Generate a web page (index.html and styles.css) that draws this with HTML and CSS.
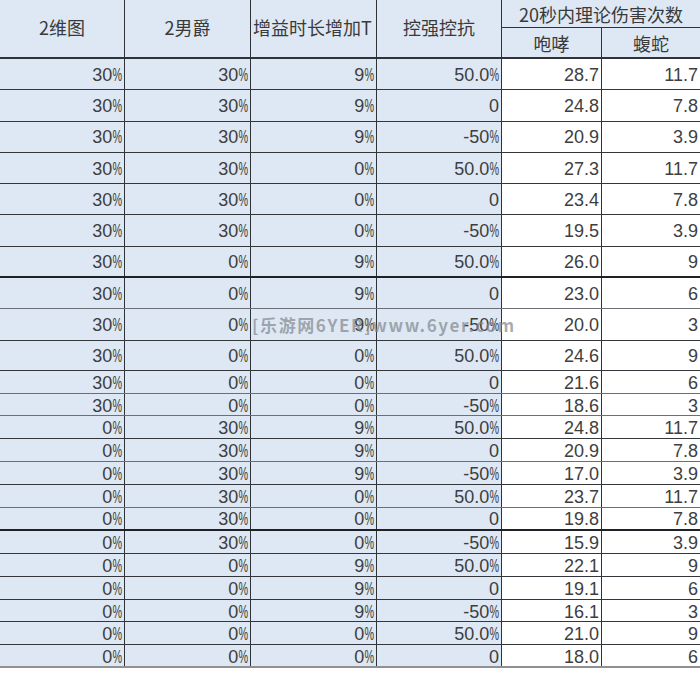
FILE: index.html
```html
<!DOCTYPE html>
<html lang="zh">
<head>
<meta charset="utf-8">
<title>20秒内理论伤害次数</title>
<link rel="stylesheet" href="styles.css">
</head>
<body>
<div class="sheet">
  <div class="head">
    <div class="h h1">2维图</div>
    <div class="h h2">2男爵</div>
    <div class="h h3">增益时长增加T</div>
    <div class="h h4">控强控抗</div>
    <div class="h h5">20秒内理论伤害次数</div>
    <div class="h h6">咆哮</div>
    <div class="h h7">蝮蛇</div>
  </div>

  <div class="row t"><div class="c">30<em class="p">%</em></div><div class="c">30<em class="p">%</em></div><div class="c">9<em class="p">%</em></div><div class="c">50.0<em class="p">%</em></div><div class="c">28.7</div><div class="c">11.7</div></div>
  <div class="row t"><div class="c">30<em class="p">%</em></div><div class="c">30<em class="p">%</em></div><div class="c">9<em class="p">%</em></div><div class="c">0</div><div class="c">24.8</div><div class="c">7.8</div></div>
  <div class="row t"><div class="c">30<em class="p">%</em></div><div class="c">30<em class="p">%</em></div><div class="c">9<em class="p">%</em></div><div class="c">-50<em class="p">%</em></div><div class="c">20.9</div><div class="c">3.9</div></div>
  <div class="row t"><div class="c">30<em class="p">%</em></div><div class="c">30<em class="p">%</em></div><div class="c">0<em class="p">%</em></div><div class="c">50.0<em class="p">%</em></div><div class="c">27.3</div><div class="c">11.7</div></div>
  <div class="row t"><div class="c">30<em class="p">%</em></div><div class="c">30<em class="p">%</em></div><div class="c">0<em class="p">%</em></div><div class="c">0</div><div class="c">23.4</div><div class="c">7.8</div></div>
  <div class="row t"><div class="c">30<em class="p">%</em></div><div class="c">30<em class="p">%</em></div><div class="c">0<em class="p">%</em></div><div class="c">-50<em class="p">%</em></div><div class="c">19.5</div><div class="c">3.9</div></div>
  <div class="row t thick"><div class="c">30<em class="p">%</em></div><div class="c">0<em class="p">%</em></div><div class="c">9<em class="p">%</em></div><div class="c">50.0<em class="p">%</em></div><div class="c">26.0</div><div class="c">9</div></div>
  <div class="row t grey"><div class="c">30<em class="p">%</em></div><div class="c">0<em class="p">%</em></div><div class="c">9<em class="p">%</em></div><div class="c">0</div><div class="c">23.0</div><div class="c">6</div></div>
  <div class="row t"><div class="c">30<em class="p">%</em></div><div class="c">0<em class="p">%</em></div><div class="c">9<em class="p">%</em></div><div class="c">-50<em class="p">%</em></div><div class="c">20.0</div><div class="c">3</div></div>
  <div class="row m"><div class="c">30<em class="p">%</em></div><div class="c">0<em class="p">%</em></div><div class="c">0<em class="p">%</em></div><div class="c">50.0<em class="p">%</em></div><div class="c">24.6</div><div class="c">9</div></div>
  <div class="row s grey"><div class="c">30<em class="p">%</em></div><div class="c">0<em class="p">%</em></div><div class="c">0<em class="p">%</em></div><div class="c">0</div><div class="c">21.6</div><div class="c">6</div></div>
  <div class="row s grey"><div class="c">30<em class="p">%</em></div><div class="c">0<em class="p">%</em></div><div class="c">0<em class="p">%</em></div><div class="c">-50<em class="p">%</em></div><div class="c">18.6</div><div class="c">3</div></div>
  <div class="row s"><div class="c">0<em class="p">%</em></div><div class="c">30<em class="p">%</em></div><div class="c">9<em class="p">%</em></div><div class="c">50.0<em class="p">%</em></div><div class="c">24.8</div><div class="c">11.7</div></div>
  <div class="row s grey"><div class="c">0<em class="p">%</em></div><div class="c">30<em class="p">%</em></div><div class="c">9<em class="p">%</em></div><div class="c">0</div><div class="c">20.9</div><div class="c">7.8</div></div>
  <div class="row s"><div class="c">0<em class="p">%</em></div><div class="c">30<em class="p">%</em></div><div class="c">9<em class="p">%</em></div><div class="c">-50<em class="p">%</em></div><div class="c">17.0</div><div class="c">3.9</div></div>
  <div class="row s grey"><div class="c">0<em class="p">%</em></div><div class="c">30<em class="p">%</em></div><div class="c">0<em class="p">%</em></div><div class="c">50.0<em class="p">%</em></div><div class="c">23.7</div><div class="c">11.7</div></div>
  <div class="row s thick"><div class="c">0<em class="p">%</em></div><div class="c">30<em class="p">%</em></div><div class="c">0<em class="p">%</em></div><div class="c">0</div><div class="c">19.8</div><div class="c">7.8</div></div>
  <div class="row s"><div class="c">0<em class="p">%</em></div><div class="c">30<em class="p">%</em></div><div class="c">0<em class="p">%</em></div><div class="c">-50<em class="p">%</em></div><div class="c">15.9</div><div class="c">3.9</div></div>
  <div class="row s"><div class="c">0<em class="p">%</em></div><div class="c">0<em class="p">%</em></div><div class="c">9<em class="p">%</em></div><div class="c">50.0<em class="p">%</em></div><div class="c">22.1</div><div class="c">9</div></div>
  <div class="row s"><div class="c">0<em class="p">%</em></div><div class="c">0<em class="p">%</em></div><div class="c">9<em class="p">%</em></div><div class="c">0</div><div class="c">19.1</div><div class="c">6</div></div>
  <div class="row s"><div class="c">0<em class="p">%</em></div><div class="c">0<em class="p">%</em></div><div class="c">9<em class="p">%</em></div><div class="c">-50<em class="p">%</em></div><div class="c">16.1</div><div class="c">3</div></div>
  <div class="row s"><div class="c">0<em class="p">%</em></div><div class="c">0<em class="p">%</em></div><div class="c">0<em class="p">%</em></div><div class="c">50.0<em class="p">%</em></div><div class="c">21.0</div><div class="c">9</div></div>
  <div class="row s last"><div class="c">0<em class="p">%</em></div><div class="c">0<em class="p">%</em></div><div class="c">0<em class="p">%</em></div><div class="c">0</div><div class="c">18.0</div><div class="c">6</div></div>

  <div class="wm">[乐游网6YER]www.6yer.com</div>
</div>
</body>
</html>
```
FILE: styles.css
```css
* { box-sizing: border-box; }

html, body {
  margin: 0;
  padding: 0;
  background: #ffffff;
}

.sheet {
  position: relative;
  width: 700px;
  font-family: "Liberation Sans", "Noto Sans CJK SC", sans-serif;
  color: #3e3e3e;
}

.head {
  display: grid;
  grid-template-columns: 125px 126px 126px 125px 100px 98px;
  grid-template-rows: 28px 29px;
  height: 59px;
  background: #dde8f4;
  border-bottom: 2px solid #2f3338;
  font-family: "Noto Sans CJK SC", "Liberation Sans", sans-serif;
  font-size: 18px;
  color: #3a3a3a;
}

.h {
  display: flex;
  align-items: center;
  justify-content: center;
  border-right: 1px solid #2f3338;
  white-space: nowrap;
  line-height: 1;
}

.h1, .h2, .h3, .h4 {
  grid-row: 1 / span 2;
  padding-bottom: 4px;
}

.h1 { grid-column: 1; }
.h2 { grid-column: 2; }
.h3 { grid-column: 3; justify-content: flex-start; padding-left: 2px; }
.h4 { grid-column: 4; }

.h5 {
  grid-column: 5 / span 2;
  grid-row: 1;
  border-right: 0;
  border-bottom: 1px solid #2f3338;
}

.h6 { grid-column: 5; grid-row: 2; }
.h7 { grid-column: 6; grid-row: 2; border-right: 0; }

.row {
  display: grid;
  grid-template-columns: 125px 126px 126px 125px 100px 98px;
  border-bottom: 1px solid #33373c;
  font-size: 18px;
}

.row.t { height: 31.3px; }
.row.m { height: 30px; }
.row.s { height: 22.9px; }

.row.grey { border-bottom-color: #6c7076; }
.row.thick { border-bottom: 2px solid #1e2125; }
.row.last { border-bottom: 2px solid #8e9094; }

.c {
  display: flex;
  align-items: center;
  justify-content: flex-end;
  padding-right: 2px;
  padding-top: 1px;
  border-right: 1px solid #2f3338;
  white-space: nowrap;
  line-height: 1;
  background: #ffffff;
}

.row.s .c { padding-top: 2px; }

.c:nth-child(-n+4) { background: #dde8f4; }
.c:last-child { border-right: 0; }

.p {
  font-style: normal;
  display: inline-block;
  transform: scaleX(0.6);
  transform-origin: right center;
  margin-left: -6.4px;
}

.wm {
  position: absolute;
  left: 252px;
  top: 315px;
  font-family: "Noto Sans CJK SC", "Liberation Sans", sans-serif;
  font-weight: 700;
  font-size: 17px;
  letter-spacing: 1.6px;
  line-height: 20px;
  color: rgba(128, 134, 140, 0.7);
  white-space: nowrap;
  pointer-events: none;
}
```
